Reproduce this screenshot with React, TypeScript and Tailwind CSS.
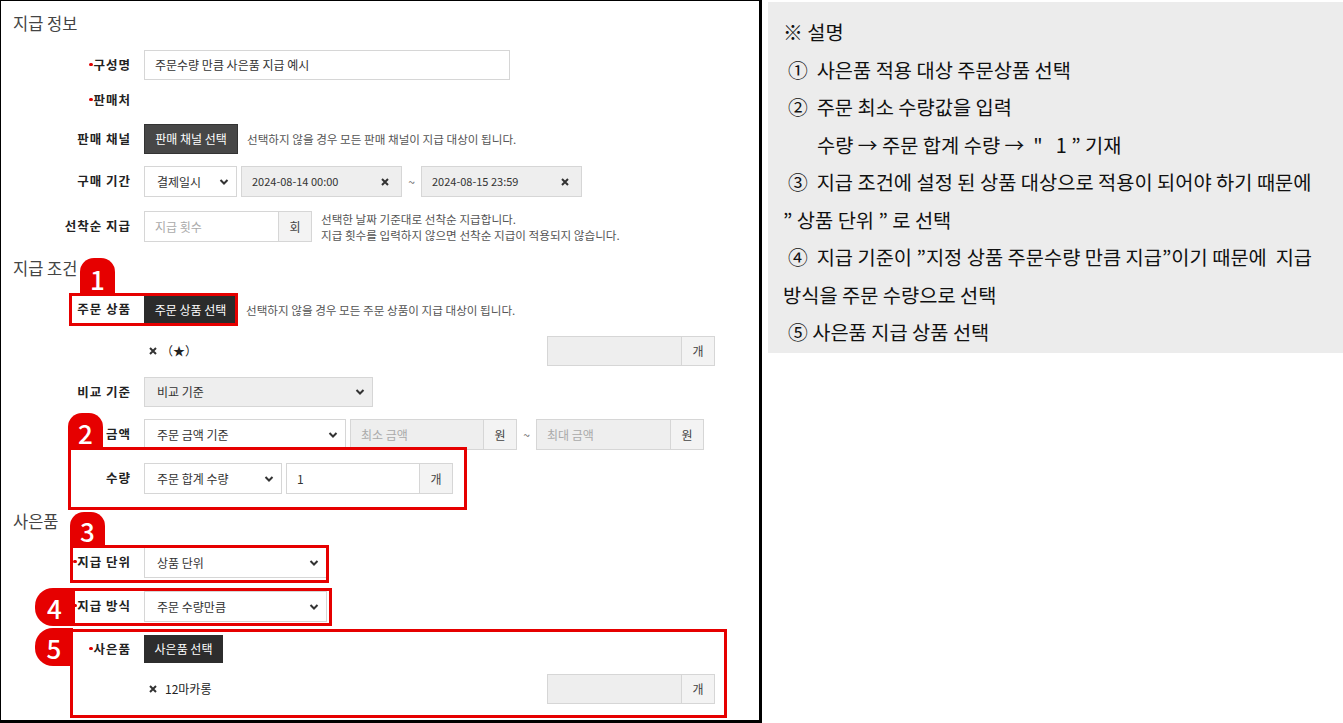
import type { ReactNode } from 'react';

const KR = "font-['Noto_Sans_CJK_KR',sans-serif]";

function Chevron() {
  return (
    <svg width="10" height="10" viewBox="0 0 10 10" className="shrink-0">
      <path d="M1.5 3 L5 6.5 L8.5 3" fill="none" stroke="#333" strokeWidth="2" />
    </svg>
  );
}

function XMark() {
  return (
    <svg width="8" height="8" viewBox="0 0 8 8" className="shrink-0">
      <path d="M1 1 L7 7 M7 1 L1 7" stroke="#333" strokeWidth="2" />
    </svg>
  );
}

function Label({ children, req }: { children: ReactNode; req?: boolean }) {
  return (
    <div className="w-[130px] shrink-0 flex items-center justify-end text-[12.5px] tracking-[1px] font-bold text-[#222]">
      {req && <span className="w-[4px] h-[3px] rounded-full bg-[#e00000] mb-[2px]" />}
      {children}
    </div>
  );
}

function Row({ className, children }: { className: string; children: ReactNode }) {
  return <div className={`flex items-center ${className}`}>{children}</div>;
}

function Select({ w, value, gray }: { w: string; value: string; gray?: boolean }) {
  return (
    <div className={`${w} h-full flex items-center justify-between pl-[12px] pr-[7px] border border-[#d6d6d6] text-[12px] text-[#333] ${gray ? 'bg-[#eeeeee]' : 'bg-white'}`}>
      <span>{value}</span>
      <Chevron />
    </div>
  );
}

function UnitInput({ w, value, placeholder, gray, unit }: { w: string; value?: string; placeholder?: string; gray?: boolean; unit: string }) {
  return (
    <div className="flex h-full">
      <div className={`${w} h-full flex items-center pl-[10px] border border-[#d6d6d6] text-[12px] ${gray ? 'bg-[#eeeeee]' : 'bg-white'} ${value ? 'text-[#333]' : 'text-[#aaa]'}`}>
        {value ?? placeholder}
      </div>
      <div className="w-[33px] h-full flex items-center justify-center border border-l-0 border-[#d6d6d6] bg-[#f3f3f3] text-[12px] text-[#444]">
        {unit}
      </div>
    </div>
  );
}

function DarkButton({ w, bg, children }: { w: string; bg: string; children: ReactNode }) {
  return (
    <div className={`${w} ${bg} h-full flex items-center justify-center text-[12px] text-white`}>{children}</div>
  );
}

function Help({ children }: { children: ReactNode }) {
  return <div className="ml-[9px] text-[11.6px] leading-[16px] text-[#555]">{children}</div>;
}

function Heading({ className, children }: { className: string; children: ReactNode }) {
  return <div className={`pl-[12px] h-[24px] leading-[24px] text-[16.5px] text-[#444] ${className}`}>{children}</div>;
}

export default function App() {
  return (
    <div className={`w-[1343px] h-[723px] bg-white flex items-start ${KR}`}>
      {/* form panel */}
      <div className="relative w-[762px] h-[723px] shrink-0 border-t border-l border-r-[3px] border-b-[3px] border-black bg-white">
        <Heading className="mt-[10px]">지급 정보</Heading>

        <Row className="mt-[15px] h-[30px]">
          <Label req>구성명</Label>
          <div className="ml-[13px] w-[366px] h-full flex items-center pl-[10px] border border-[#d6d6d6] text-[12px] text-[#333]">
            주문수량 만큼 사은품 지급 예시
          </div>
        </Row>

        <Row className="mt-[5px] h-[30px]">
          <Label req>판매처</Label>
        </Row>

        <Row className="mt-[9px] h-[30px]">
          <Label>판매 채널</Label>
          <div className="ml-[13px] h-full">
            <DarkButton w="w-[94px]" bg="bg-[#474747] border border-[#333]">판매 채널 선택</DarkButton>
          </div>
          <Help>선택하지 않을 경우 모든 판매 채널이 지급 대상이 됩니다.</Help>
        </Row>

        <Row className="mt-[12px] h-[31px]">
          <Label>구매 기간</Label>
          <div className="ml-[13px] h-full">
            <Select w="w-[93px]" value="결제일시" />
          </div>
          <div className="ml-[4px] w-[161px] h-full flex items-center justify-between pl-[10px] pr-[12px] border border-[#d6d6d6] bg-[#eeeeee] text-[11px] text-[#333]">
            <span>2024-08-14 00:00</span>
            <XMark />
          </div>
          <div className="w-[19px] text-center text-[12px] text-[#666]">~</div>
          <div className="w-[161px] h-full flex items-center justify-between pl-[10px] pr-[12px] border border-[#d6d6d6] bg-[#eeeeee] text-[11px] text-[#333]">
            <span>2024-08-15 23:59</span>
            <XMark />
          </div>
        </Row>

        <Row className="mt-[14px] h-[31px]">
          <Label>선착순 지급</Label>
          <div className="ml-[13px] h-full">
            <UnitInput w="w-[135px]" placeholder="지급 횟수" unit="회" />
          </div>
          <Help>
            선택한 날짜 기준대로 선착순 지급합니다.
            <br />
            지급 횟수를 입력하지 않으면 선착순 지급이 적용되지 않습니다.
          </Help>
        </Row>

        <Heading className="mt-[14px]">지급 조건</Heading>

        <Row className="mt-[16px] h-[27px]">
          <Label>주문 상품</Label>
          <div className="ml-[13px] h-full">
            <DarkButton w="w-[93px]" bg="bg-[#2b2b2b]">주문 상품 선택</DarkButton>
          </div>
          <Help>선택하지 않을 경우 모든 주문 상품이 지급 대상이 됩니다.</Help>
        </Row>

        <Row className="mt-[13px] h-[30px] pr-[44px]">
          <div className="w-[148px] shrink-0" />
          <XMark />
          <span className="ml-[4px] text-[12px] text-[#222]">（★）</span>
          <div className="ml-auto h-full">
            <UnitInput w="w-[135px]" gray unit="개" />
          </div>
        </Row>

        <Row className="mt-[11px] h-[30px]">
          <Label>비교 기준</Label>
          <div className="ml-[13px] h-full">
            <Select w="w-[229px]" value="비교 기준" gray />
          </div>
        </Row>

        <Row className="mt-[12px] h-[31px]">
          <Label>금액</Label>
          <div className="ml-[13px] h-full">
            <Select w="w-[202px]" value="주문 금액 기준" />
          </div>
          <div className="ml-[4px] h-full">
            <UnitInput w="w-[134px]" placeholder="최소 금액" gray unit="원" />
          </div>
          <div className="w-[19px] text-center text-[12px] text-[#666]">~</div>
          <div className="h-full">
            <UnitInput w="w-[135px]" placeholder="최대 금액" gray unit="원" />
          </div>
        </Row>

        <Row className="mt-[13px] h-[31px]">
          <Label>수량</Label>
          <div className="ml-[13px] h-full">
            <Select w="w-[138px]" value="주문 합계 수량" />
          </div>
          <div className="ml-[4px] h-full">
            <UnitInput w="w-[134px]" value="1" unit="개" />
          </div>
        </Row>

        <Heading className="mt-[15px]">사은품</Heading>

        <Row className="mt-[14px] h-[31px]">
          <Label req>지급 단위</Label>
          <div className="ml-[13px] h-full">
            <Select w="w-[183px]" value="상품 단위" />
          </div>
        </Row>

        <Row className="mt-[13px] h-[31px]">
          <Label req>지급 방식</Label>
          <div className="ml-[13px] h-full">
            <Select w="w-[183px]" value="주문 수량만큼" />
          </div>
        </Row>

        <Row className="mt-[13px] h-[28px]">
          <Label req>사은품</Label>
          <div className="ml-[13px] h-full">
            <DarkButton w="w-[79px]" bg="bg-[#2d2d2d]">사은품 선택</DarkButton>
          </div>
        </Row>

        <Row className="mt-[11px] h-[30px] pr-[44px]">
          <div className="w-[148px] shrink-0" />
          <XMark />
          <span className="ml-[8px] text-[12px] text-[#222]">12마카롱</span>
          <div className="ml-auto h-full">
            <UnitInput w="w-[135px]" gray unit="개" />
          </div>
        </Row>

        {/* annotation overlays */}
        <div className="absolute left-[79px] top-[257px] w-[35px] h-[38px] rounded-t-[14px] bg-[#e60000] flex items-center justify-center pt-[2px] text-[26px] font-medium text-white">1</div>
        <div className="absolute left-[68px] top-[292px] w-[169px] h-[33px] border-[3px] border-[#e60000] pointer-events-none" />

        <div className="absolute left-[67px] top-[412px] w-[35px] h-[36px] rounded-t-[14px] bg-[#e60000] flex items-center justify-center pt-[2px] text-[26px] font-medium text-white">2</div>
        <div className="absolute left-[67px] top-[446px] w-[399px] h-[63px] border-[3px] border-[#e60000] pointer-events-none" />

        <div className="absolute left-[69px] top-[511px] w-[35px] h-[35px] rounded-t-[14px] bg-[#e60000] flex items-center justify-center pt-[2px] text-[26px] font-medium text-white">3</div>
        <div className="absolute left-[69px] top-[544px] w-[259px] h-[38px] border-[3px] border-[#e60000] pointer-events-none" />

        <div className="absolute left-[34px] top-[587px] w-[39px] h-[38px] rounded-l-[18px] bg-[#e60000] flex items-center justify-center text-[26px] font-medium text-white">4</div>
        <div className="absolute left-[71px] top-[587px] w-[260px] h-[38px] border-[3px] border-[#e60000] pointer-events-none" />

        <div className="absolute left-[34px] top-[627px] w-[38px] h-[38px] rounded-l-[18px] bg-[#e60000] flex items-center justify-center text-[26px] font-medium text-white">5</div>
        <div className="absolute left-[69px] top-[628px] w-[657px] h-[89px] border-[3px] border-[#e60000] pointer-events-none" />
      </div>

      {/* explanation panel */}
      <div className="ml-[6px] mt-[2px] w-[575px] h-[351px] bg-[#ececec] pl-[15px] pt-[11px] text-[19.8px] leading-[37.5px] text-[#111] whitespace-pre">
        <div>※ 설명</div>
        <div className="pl-[5px]">①  사은품 적용 대상 주문상품 선택</div>
        <div className="pl-[5px]">②  주문 최소 수량값을 입력</div>
        <div className="pl-[34px]">수량 → 주문 합계 수량 →  "   1 ” 기재</div>
        <div className="pl-[5px]">③  지급 조건에 설정 된 상품 대상으로 적용이 되어야 하기 때문에</div>
        <div>” 상품 단위 ” 로 선택</div>
        <div className="pl-[5px]">④  지급 기준이 ”지정 상품 주문수량 만큼 지급”이기 때문에  지급</div>
        <div>방식을 주문 수량으로 선택</div>
        <div className="pl-[5px]">⑤ 사은품 지급 상품 선택</div>
      </div>
    </div>
  );
}
